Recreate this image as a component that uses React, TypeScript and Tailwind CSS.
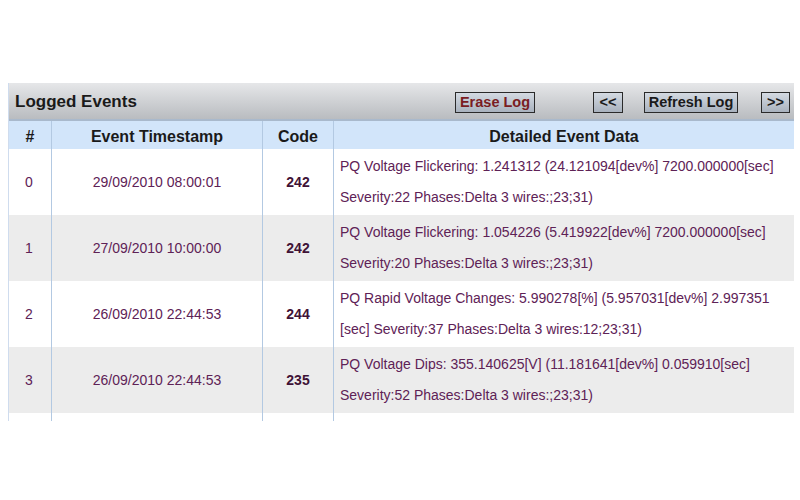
const rows = [
  {
    n: '0',
    ts: '29/09/2010 08:00:01',
    code: '242',
    lines: ['PQ Voltage Flickering: 1.241312 (24.121094[dev%] 7200.000000[sec]', 'Severity:22 Phases:Delta 3 wires:;23;31)'],
  },
  {
    n: '1',
    ts: '27/09/2010 10:00:00',
    code: '242',
    lines: ['PQ Voltage Flickering: 1.054226 (5.419922[dev%] 7200.000000[sec]', 'Severity:20 Phases:Delta 3 wires:;23;31)'],
  },
  {
    n: '2',
    ts: '26/09/2010 22:44:53',
    code: '244',
    lines: ['PQ Rapid Voltage Changes: 5.990278[%] (5.957031[dev%] 2.997351', '[sec] Severity:37 Phases:Delta 3 wires:12;23;31)'],
  },
  {
    n: '3',
    ts: '26/09/2010 22:44:53',
    code: '235',
    lines: ['PQ Voltage Dips: 355.140625[V] (11.181641[dev%] 0.059910[sec]', 'Severity:52 Phases:Delta 3 wires:;23;31)'],
  },
]

function Btn({ label, w, red }: { label: string; w: string; red?: boolean }) {
  return (
    <button
      className={`${w} h-[21px] shrink-0 whitespace-nowrap border border-[#2a2a2a] bg-gradient-to-b from-[#d4dae2] to-[#a9b2be] text-[14.5px] font-bold leading-none ${red ? 'text-[#7a1c22]' : 'text-[#1a1a1a]'}`}
    >
      {label}
    </button>
  )
}

export default function App() {
  return (
    <div className="w-[800px] h-[500px] bg-white pt-[83px] pl-[8px] pr-[6px] font-['Liberation_Sans',Arial,sans-serif]">
      <div className="h-[338px] overflow-hidden border-l border-[#cfdcee]">
        {/* Title bar */}
        <div className="h-[38px] flex items-center pl-[6px] pr-[4px] bg-gradient-to-b from-[#e6e7e9] via-[#cfd1d4] to-[#b9bcc0] border-b-[2px] border-[#a9b9cc]">
          <span className="shrink-0 whitespace-nowrap text-[17px] font-bold text-[#1a1a1a] pt-[1px]">Logged Events</span>
          <div className="ml-auto flex items-center pt-[3px]">
            <Btn label="Erase Log" w="w-[80px]" red />
            <div className="w-[58px]" />
            <Btn label="<<" w="w-[30px]" />
            <div className="w-[21px]" />
            <Btn label="Refresh Log" w="w-[94px]" />
            <div className="w-[23px]" />
            <Btn label=">>" w="w-[29px]" />
          </div>
        </div>

        {/* Column headers */}
        <div className="grid grid-cols-[43px_211px_71px_1fr] h-[28px] bg-[#d2e5fa] text-[16px] font-bold text-[#1a1a1a]">
          <div className="flex items-center justify-center pt-[3px] border-r border-[#b3c9e2]">#</div>
          <div className="flex items-center justify-center pt-[3px] border-r border-[#b3c9e2]">Event Timestamp</div>
          <div className="flex items-center justify-center pt-[3px] border-r border-[#b3c9e2]">Code</div>
          <div className="flex items-center justify-center pt-[3px]">Detailed Event Data</div>
        </div>

        {/* Rows */}
        {[...rows, null].map((r, i) => (
          <div
            key={i}
            className={`grid grid-cols-[43px_211px_71px_1fr] h-[66px] text-[14px] text-[#5e2256] ${i % 2 === 1 ? 'bg-[#ececec]' : 'bg-white'}`}
          >
            <div className="flex items-center pl-[16px] border-r border-[#b3c9e2]">{r?.n}</div>
            <div className="flex items-center justify-center border-r border-[#b3c9e2]">{r?.ts}</div>
            <div className="flex items-center justify-center font-bold text-[#3f1236] border-r border-[#b3c9e2]">{r?.code}</div>
            <div className="flex flex-col justify-center pl-[6px] leading-[31px]">
              {r?.lines.map((l) => (
                <span key={l} className="whitespace-nowrap">{l}</span>
              ))}
            </div>
          </div>
        ))}
      </div>
    </div>
  )
}
